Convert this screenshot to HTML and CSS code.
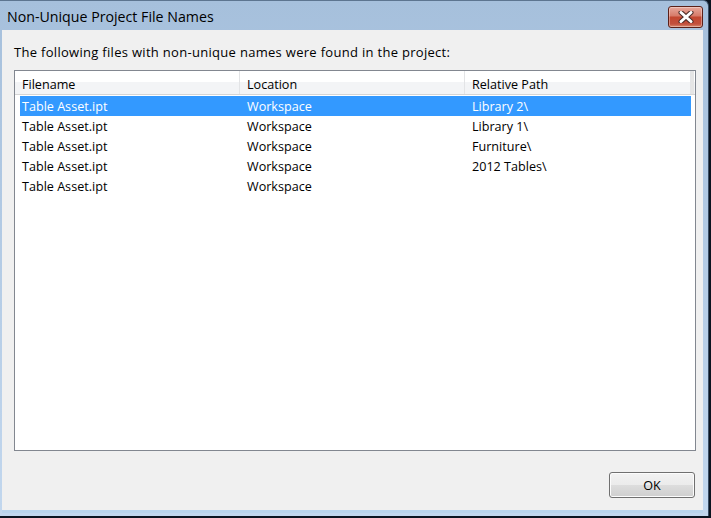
FILE: index.html
```html
<!DOCTYPE html>
<html lang="en">
<head>
    <meta charset="UTF-8">
    <title>Non-Unique Project File Names</title>
    <link rel="stylesheet" href="styles.css">
</head>
<body>
    <div class="window">
        <!-- title bar -->
        <div class="titlebar">
            <span class="title">Non-Unique Project File Names</span>
            <div class="close">
                <svg width="18" height="12" viewBox="0 0 18 12">
                    <path d="M4 1.5 L14 10.5 M14 1.5 L4 10.5" stroke="#4a2a26" stroke-width="5" stroke-linecap="round"/>
                    <path d="M4 1.5 L14 10.5 M14 1.5 L4 10.5" stroke="#ffffff" stroke-width="3" stroke-linecap="round"/>
                </svg>
            </div>
        </div>
        <!-- client -->
        <div class="client">
            <p class="intro">The following files with non-unique names were found in the project:</p>
            <div class="list">
                <div class="head">
                    <div class="hcell">Filename</div>
                    <div class="hcell">Location</div>
                    <div class="hcell">Relative Path</div>
                    <div class="grip"></div>
                </div>
                <div class="rows">
                    <div class="row selected">
                        <div class="cell">Table Asset.ipt</div>
                        <div class="cell">Workspace</div>
                        <div class="cell">Library 2\</div>
                    </div>
                    <div class="row">
                        <div class="cell">Table Asset.ipt</div>
                        <div class="cell">Workspace</div>
                        <div class="cell">Library 1\</div>
                    </div>
                    <div class="row">
                        <div class="cell">Table Asset.ipt</div>
                        <div class="cell">Workspace</div>
                        <div class="cell">Furniture\</div>
                    </div>
                    <div class="row">
                        <div class="cell">Table Asset.ipt</div>
                        <div class="cell">Workspace</div>
                        <div class="cell">2012 Tables\</div>
                    </div>
                    <div class="row">
                        <div class="cell">Table Asset.ipt</div>
                        <div class="cell">Workspace</div>
                        <div class="cell"></div>
                    </div>
                </div>
            </div>
            <div class="buttons">
                <button class="btn">OK</button>
            </div>
        </div>
    </div>
</body>
</html>
```

FILE: styles.css
```css
*{
    margin: 0;
    padding: 0;
    box-sizing: border-box;
}
body{
    background: #0b1420;
    width: 711px;
    height: 518px;
    overflow: hidden;
    font-family: "Open Sans", "Liberation Sans", sans-serif;
}
.window{
    width: 709px;
    height: 516px;
    display: flex;
    flex-direction: column;
    background: linear-gradient(#a6c0dc, #c2d7ee);
    border-right: 1px solid #3b4f66;
    border-top: 1px solid #5d7590;
    border-top-right-radius: 6px;
    padding: 0 5px 3px 2px;
}
.titlebar{
    height: 29px;
    display: flex;
    align-items: center;
    justify-content: space-between;
}
.title{
    font-family: "Open Sans", "Noto Sans", sans-serif;
    font-size: 14.2px;
    color: #000;
    padding-left: 5px;
    padding-top: 2px;
}
.close{
    width: 35px;
    height: 22px;
    margin-top: 3px;
    border: 1px solid #5b2018;
    border-radius: 3px;
    background: linear-gradient(#e7a89c 0%, #d77a68 45%, #c3462f 50%, #c2503c 85%, #d98a70 100%);
    display: flex;
    align-items: center;
    justify-content: center;
    box-shadow: inset 0 0 0 1px rgba(255,255,255,.35);
}
.client{
    flex: 1;
    background: #f0f0f0;
    padding: 0 7px 0 12px;
    display: flex;
    flex-direction: column;
    border-bottom: 3px solid #b9d4ec;
}
.intro{
    font-size: 13px;
    letter-spacing: .3px;
    line-height: 16px;
    margin-top: 14px;
    color: #000;
}
.list{
    margin-top: 10px;
    height: 381px;
    background: #fff;
    border: 1px solid #828790;
    font-size: 12.6px;
    color: #000;
}
.head{
    display: flex;
    height: 24px;
    background: linear-gradient(#ffffff 50%, #f3f4f6 50%);
    border-bottom: 1px solid #d5d5d5;
}
.hcell{
    width: 225px;
    line-height: 23px;
    padding: 2px 0 0 7px;
    border-right: 1px solid #e3e4e6;
}
.hcell:nth-child(3){
    width: 226px;
}
.grip{
    width: 3px;
    background: #e5e5e5;
}
.rows{
    padding: 1px 0 0 5px;
}
.row{
    width: 671px;
    height: 20px;
    display: flex;
    line-height: 20px;
}
.row.selected{
    background: #3399ff;
    color: #fff;
}
.cell{
    width: 225px;
    padding: 1px 0 0 7px;
}
.cell:first-child{
    width: 220px;
    padding-left: 2px;
}
.buttons{
    display: flex;
    justify-content: flex-end;
    padding-top: 21px;
}
.btn{
    width: 86px;
    height: 26px;
    margin-right: 1px;
    border: 1px solid #707070;
    border-radius: 3px;
    background: linear-gradient(#f2f2f2 0%, #ebebeb 50%, #dddddd 50%, #cfcfcf 100%);
    box-shadow: inset 0 0 0 1px #fcfcfc;
    font-family: "Open Sans", "Liberation Sans", sans-serif;
    font-size: 12.6px;
    color: #000;
}
```
